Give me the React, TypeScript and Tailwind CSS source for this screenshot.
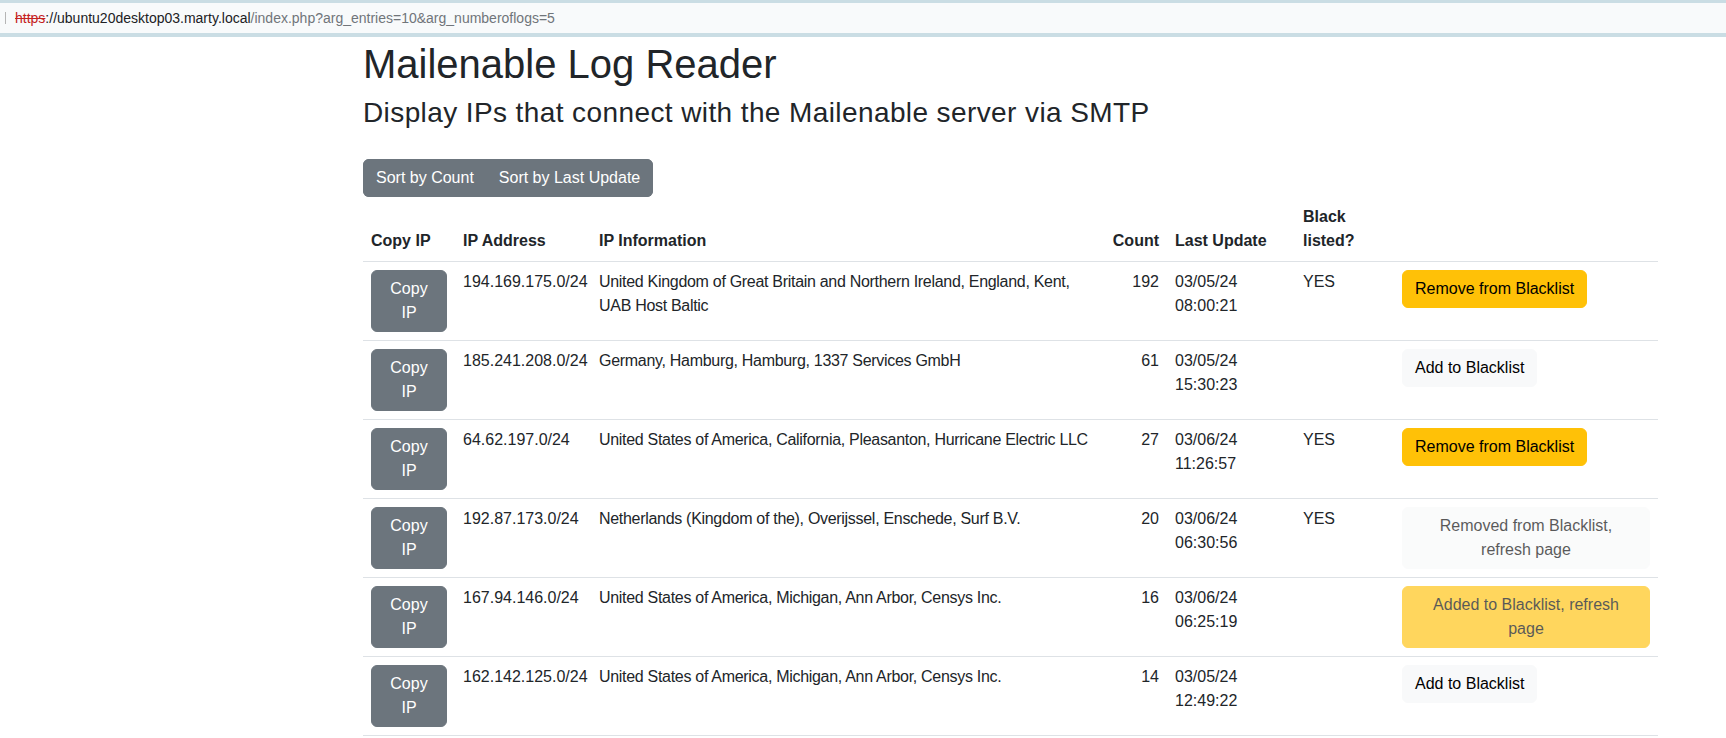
import React from 'react';

type Action = 'remove' | 'add' | 'removed' | 'added';

type Entry = {
  ip: string;
  info: string;
  count: number;
  date: string;
  listed: boolean;
  action: Action;
};

const entries: Entry[] = [
  {
    ip: '194.169.175.0/24',
    info: 'United Kingdom of Great Britain and Northern Ireland, England, Kent, UAB Host Baltic',
    count: 192,
    date: '03/05/24 08:00:21',
    listed: true,
    action: 'remove',
  },
  {
    ip: '185.241.208.0/24',
    info: 'Germany, Hamburg, Hamburg, 1337 Services GmbH',
    count: 61,
    date: '03/05/24 15:30:23',
    listed: false,
    action: 'add',
  },
  {
    ip: '64.62.197.0/24',
    info: 'United States of America, California, Pleasanton, Hurricane Electric LLC',
    count: 27,
    date: '03/06/24 11:26:57',
    listed: true,
    action: 'remove',
  },
  {
    ip: '192.87.173.0/24',
    info: 'Netherlands (Kingdom of the), Overijssel, Enschede, Surf B.V.',
    count: 20,
    date: '03/06/24 06:30:56',
    listed: true,
    action: 'removed',
  },
  {
    ip: '167.94.146.0/24',
    info: 'United States of America, Michigan, Ann Arbor, Censys Inc.',
    count: 16,
    date: '03/06/24 06:25:19',
    listed: false,
    action: 'added',
  },
  {
    ip: '162.142.125.0/24',
    info: 'United States of America, Michigan, Ann Arbor, Censys Inc.',
    count: 14,
    date: '03/05/24 12:49:22',
    listed: false,
    action: 'add',
  },
];

function ActionButton({ action }: { action: Action }) {
  if (action === 'remove') {
    return (
      <button className="rounded-md border border-[#ffc107] bg-[#ffc107] px-3 py-1.5 text-black leading-6">
        Remove from Blacklist
      </button>
    );
  }
  if (action === 'add') {
    return (
      <button className="rounded-md border border-[#f8f9fa] bg-[#f8f9fa] px-3 py-1.5 text-black leading-6">
        Add to Blacklist
      </button>
    );
  }
  if (action === 'removed') {
    return (
      <button disabled className="w-full rounded-md border border-[#f8f9fa] bg-[#f8f9fa] px-3 py-1.5 text-black leading-6 opacity-65">
        Removed from Blacklist, refresh page
      </button>
    );
  }
  return (
    <button disabled className="w-full rounded-md border border-[#ffc107] bg-[#ffc107] px-3 py-1.5 text-black leading-6 opacity-65">
      Added to Blacklist, refresh page
    </button>
  );
}

export default function App() {
  return (
    <div className="min-h-screen bg-white font-['Liberation_Sans',Arial,sans-serif] text-[#212529] text-base leading-6">
      {/* browser address bar */}
      <div className="flex h-[37px] items-center border-t-[3px] border-b-4 border-[#cadde4] bg-[#f8fafb] text-[14px]">
        <div className="ml-[5px] h-3 w-px bg-[#b5b5b5]" />
        <div className="ml-[9px] whitespace-nowrap">
          <span className="text-[#c5221f] line-through">https</span>
          <span className="text-[#202124]">://ubuntu20desktop03.marty.local</span>
          <span className="text-[#70757a]">/index.php?arg_entries=10&amp;arg_numberoflogs=5</span>
        </div>
      </div>

      <div className="ml-[363px] w-[1295px]">
        <h1 className="mt-[3px] text-[40px] leading-[48px] font-medium">Mailenable Log Reader</h1>
        <h3 className="mt-2 text-[28px] leading-[34px] font-medium tracking-[0.4px]">
          Display IPs that connect with the Mailenable server via SMTP
        </h3>

        <div className="mt-[29px] inline-flex rounded-md bg-[#6c757d] text-white">
          <button className="rounded-l-md border border-[#6c757d] px-3 py-1.5 leading-6">Sort by Count</button>
          <button className="-ml-px rounded-r-md border border-[#6c757d] px-3 py-1.5 leading-6">Sort by Last Update</button>
        </div>

        <table className="w-full table-fixed border-collapse text-left align-top">
          <colgroup>
            <col className="w-[92px]" />
            <col className="w-[136px]" />
            <col className="w-[513px]" />
            <col className="w-[63px]" />
            <col className="w-[128px]" />
            <col className="w-[99px]" />
            <col className="w-[264px]" />
          </colgroup>
          <thead className="align-bottom">
            <tr className="border-b border-[#dee2e6]">
              <th className="p-2 font-bold">Copy IP</th>
              <th className="p-2 font-bold">IP Address</th>
              <th className="p-2 font-bold">IP Information</th>
              <th className="p-2 font-bold text-right">Count</th>
              <th className="p-2 font-bold">Last Update</th>
              <th className="p-2 font-bold">Black listed?</th>
              <th className="p-2" />
            </tr>
          </thead>
          <tbody>
            {entries.map((e) => (
              <tr key={e.ip} className="border-b border-[#dee2e6] align-top">
                <td className="p-2">
                  <button className="w-[76px] rounded-md border border-[#6c757d] bg-[#6c757d] px-3 py-1.5 text-white leading-6">
                    Copy IP
                  </button>
                </td>
                <td className="p-2">{e.ip}</td>
                <td className="p-2 tracking-[-0.3px]">{e.info}</td>
                <td className="p-2 text-right">{e.count}</td>
                <td className="p-2">{e.date}</td>
                <td className="p-2">{e.listed ? 'YES' : ''}</td>
                <td className="p-2">
                  <ActionButton action={e.action} />
                </td>
              </tr>
            ))}
          </tbody>
        </table>
      </div>
    </div>
  );
}
